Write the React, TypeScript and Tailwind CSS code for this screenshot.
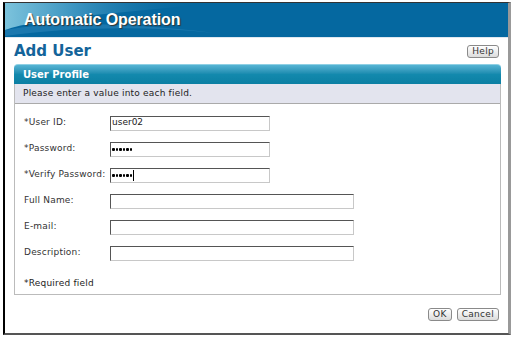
import React from "react";

const font = { fontFamily: '"DejaVu Sans", Verdana, sans-serif' };

function Field({ label, value, wide, password, caret }: { label: string; value?: string; wide?: boolean; password?: boolean; caret?: boolean }) {
  return (
    <div className="flex items-center h-[26px]">
      <span className="w-[86px] text-[9px] tracking-[0.2px] text-[#333]">{label}</span>
      <div
        className={`h-[15px] ${wide ? "w-[244px]" : "w-[160px]"} border border-[#c8c8c8] border-t-[#555] border-l-[#555] bg-white flex items-center pl-[1px] text-[9px] text-[#222]`}
      >
        {password ? (
          <span className="flex gap-[1px]">
            {[0, 1, 2, 3, 4, 5].map((i) => (
              <span key={i} className="w-[2.5px] h-[3px] bg-black rounded-[1px]" />
            ))}
          </span>
        ) : (
          value
        )}
        {caret && <span className="w-px h-[11px] bg-black ml-[1px]" />}
      </div>
    </div>
  );
}

function SmallButton({ children }: { children: React.ReactNode }) {
  return (
    <button className="h-[13px] px-[4px] rounded-[3px] border border-[#8a8a8a] bg-gradient-to-b from-white to-[#dcdcdc] text-[9px] leading-none tracking-[0.3px] text-[#333]">
      {children}
    </button>
  );
}

export default function App() {
  return (
    <div className="w-[515px] h-[338px] bg-white" style={font}>
      <div className="ml-[3px] mt-[2px] w-[508px] h-[333px] border-l-2 border-t border-b-2 border-l-black border-t-[#333] border-b-[#555] border-r-[3px] border-r-[#999] flex flex-col">
        {/* banner */}
        <div className="relative h-[34px] bg-[#0568a0] overflow-hidden flex items-center pl-[19px]">
          <svg className="absolute left-0 top-0" width="320" height="34" viewBox="0 0 320 34">
            <defs>
              <linearGradient id="sw" x1="0" y1="0" x2="1" y2="0">
                <stop offset="0" stopColor="#7cc3dc" />
                <stop offset="0.35" stopColor="#3c94c0" />
                <stop offset="1" stopColor="#0568a0" stopOpacity="0" />
              </linearGradient>
            </defs>
            <path d="M0 0 H200 C150 8 90 10 40 18 C20 21 8 24 0 27 Z" fill="url(#sw)" />
            <path d="M0 27 C40 20 110 18 210 30 C130 22 60 25 0 33 Z" fill="#2a84b8" opacity="0.6" />
          </svg>
          <span
            className="relative text-white font-bold text-[16px] tracking-[-0.1px]"
            style={{ fontFamily: '"Liberation Sans", Arial, sans-serif', textShadow: "1px 1px 1px #333" }}
          >
            Automatic Operation
          </span>
        </div>

        <div className="flex items-center justify-between px-[9px] pt-[2px] h-[26px] border-t border-[#dfe8f0]">
          <span className="text-[#13649a] font-bold text-[15px]">Add User</span>
          <SmallButton>Help</SmallButton>
        </div>

        {/* panel */}
        <div className="mx-[9px] mt-[1px] w-[487px] flex flex-col">
          <div className="h-[20px] rounded-t-[4px] bg-gradient-to-b from-[#55b4d4] via-[#1389ad] to-[#0b7fa3] border-t border-[#8fd0e4] flex items-center pl-[9px]">
            <span className="text-white font-bold text-[10px]">User Profile</span>
          </div>
          <div className="border-x border-b border-[#bbb] flex flex-col">
            <div className="h-[20px] bg-[#e3e4ee] border-b border-[#aaa] flex items-center pl-[8px] text-[9px] tracking-[0.2px] text-[#222]">
              Please enter a value into each field.
            </div>
            <div className="flex flex-col pl-[9px] pt-[6px]">
              <Field label="*User ID:" value="user02" />
              <Field label="*Password:" password />
              <Field label="*Verify Password:" password caret />
              <Field label="Full Name:" wide />
              <Field label="E-mail:" wide />
              <Field label="Description:" wide />
              <div className="h-[28px] flex items-center pt-[8px] text-[9px] tracking-[0.2px] text-[#222]">*Required field</div>
            </div>
          </div>
        </div>

        <div className="flex justify-end gap-[5px] pr-[9px] mt-[13px]">
          <SmallButton>OK</SmallButton>
          <SmallButton>Cancel</SmallButton>
        </div>
      </div>
    </div>
  );
}
